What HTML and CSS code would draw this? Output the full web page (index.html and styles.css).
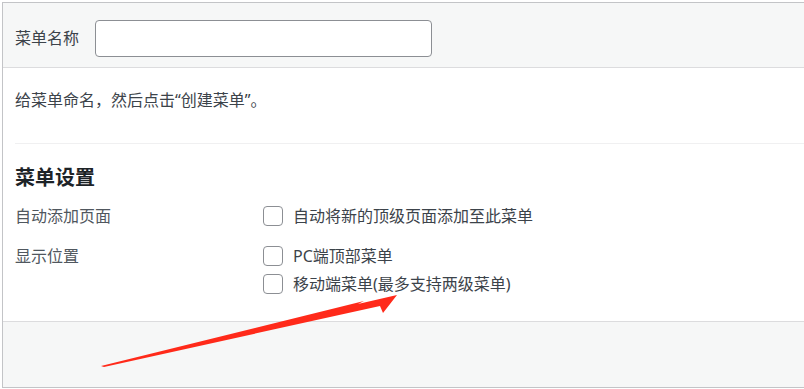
FILE: index.html
```html
<!DOCTYPE html>
<html lang="zh">
<head>
<meta charset="utf-8">
<link rel="stylesheet" href="styles.css">
</head>
<body>
<div class="panel">
  <div class="header">
    <label class="name-label">菜单名称</label>
    <input class="name-input" type="text">
  </div>
  <div class="body">
    <p class="hint">给菜单命名，然后点击“创建菜单”。</p>
    <div class="settings">
      <h3 class="title">菜单设置</h3>
      <div class="row">
        <div class="row-label">自动添加页面</div>
        <div class="row-opts">
          <label class="opt"><span class="box"></span>自动将新的顶级页面添加至此菜单</label>
        </div>
      </div>
      <div class="row row-2">
        <div class="row-label">显示位置</div>
        <div class="row-opts">
          <label class="opt"><span class="box"></span>PC端顶部菜单</label>
          <label class="opt"><span class="box"></span>移动端菜单(最多支持两级菜单)</label>
        </div>
      </div>
    </div>
  </div>
  <div class="footer"></div>
</div>
<svg class="arrow" width="804" height="389" viewBox="0 0 804 389">
  <polygon fill="#ff2a1a" points="101,366 364,301 358,304 397,295 383,313 380,306 104,367"/>
</svg>
</body>
</html>
```
FILE: styles.css
```css
html, body {
  margin: 0;
  padding: 0;
  background: #ffffff;
  font-family: "Noto Sans", "Noto Sans CJK SC", sans-serif;
  font-size: 16px;
  color: #3c434a;
}
body { position: relative; width: 804px; height: 389px; overflow: hidden; }
.panel {
  margin: 2px 0 0 2px;
  border: 1px solid #c3c4c7;
  border-right: none;
  height: 384px;
  display: flex;
  flex-direction: column;
  background: #fff;
}
.header {
  height: 64px;
  background: #f6f7f7;
  border-bottom: 1px solid #dcdcde;
  display: flex;
  align-items: center;
  padding-left: 12px;
}
.name-label {
  width: 80px;
  color: #3c434a;
  line-height: 20px;
  margin-top: 6px;
}
.name-input {
  width: 337px;
  height: 37px;
  box-sizing: border-box;
  border: 1px solid #8c8f94;
  border-radius: 4px;
  background: #fff;
  margin: 0;
  margin-top: 6px;
}
.body {
  flex: 1;
  padding: 0 0 0 11px;
}
.hint {
  margin: 22px 0 0 1px;
  line-height: 20px;
  padding-bottom: 33px;
  border-bottom: 1px solid #f0f0f1;
}
.settings { padding-left: 1px; }
.title {
  margin: 20px 0 0 0;
  font-size: 20px;
  font-weight: 700;
  color: #1d2327;
  line-height: 28px;
}
.row {
  display: flex;
  margin-top: 14px;
}
.row-2 { margin-top: 20px; }
.row-label {
  width: 248px;
  color: #50575e;
  line-height: 20px;
}
.row-opts { display: flex; flex-direction: column; gap: 8px; }
.opt {
  display: flex;
  align-items: center;
  gap: 10px;
  line-height: 20px;
  color: #3c434a;
}
.box {
  width: 20px;
  height: 20px;
  box-sizing: border-box;
  border: 1px solid #8c8f94;
  border-radius: 4px;
  background: #fff;
}
.footer {
  height: 65px;
  background: #f6f7f7;
  border-top: 1px solid #dcdcde;
}
.arrow { position: absolute; left: 0; top: 0; pointer-events: none; }
```
